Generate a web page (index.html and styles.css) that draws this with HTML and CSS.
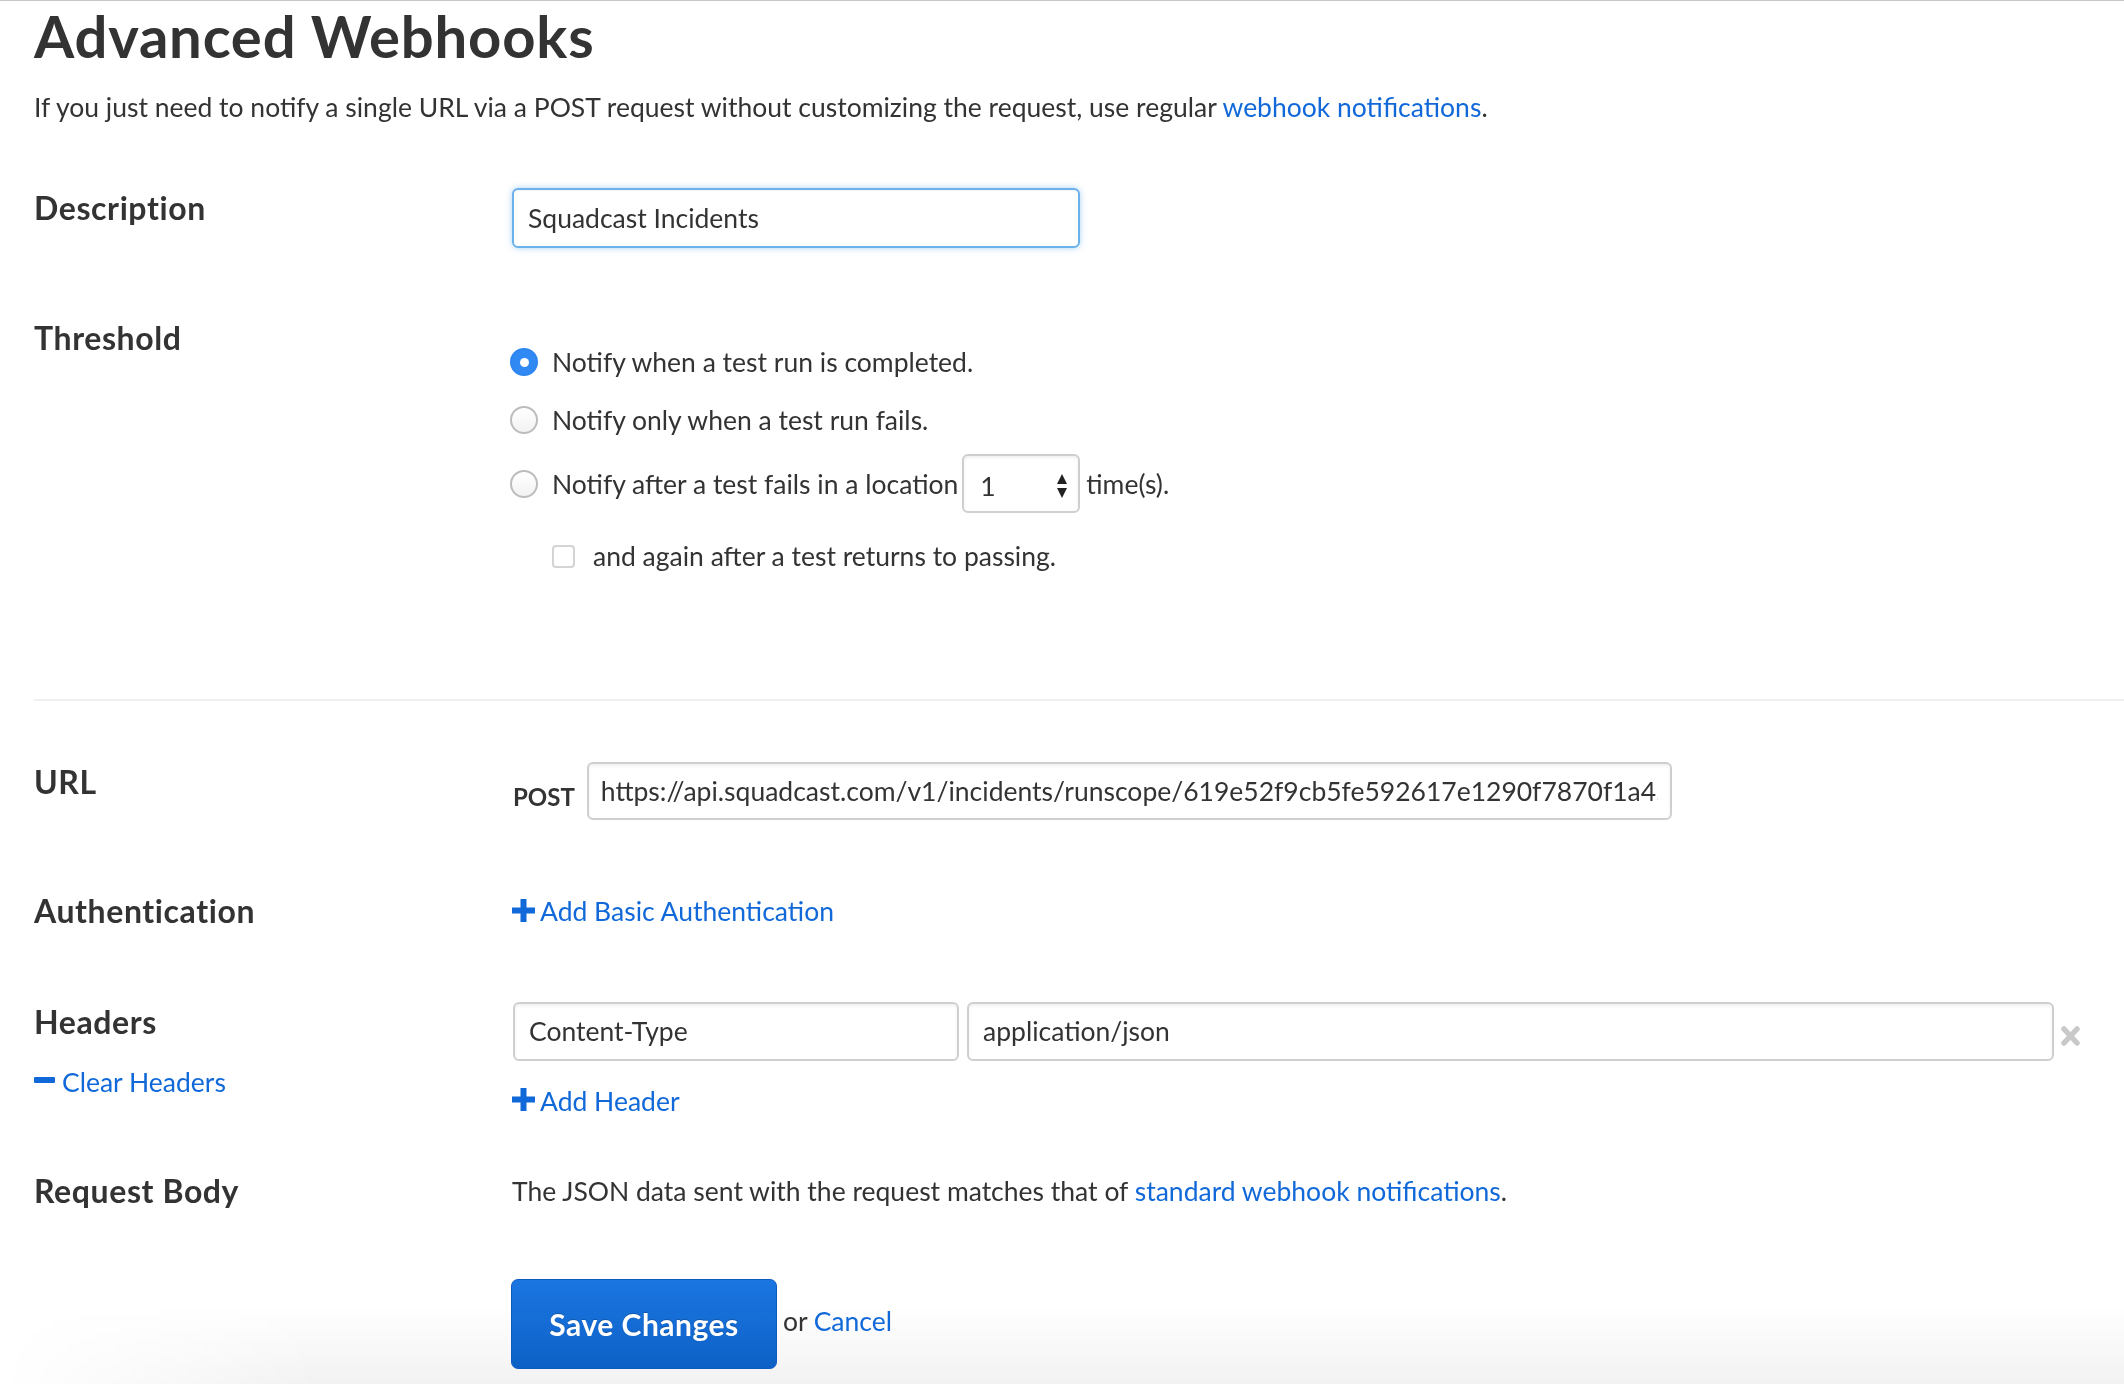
FILE: index.html
```html
<!DOCTYPE html>
<html lang="en">
<head>
<meta charset="utf-8">
<title>Advanced Webhooks</title>
<link rel="stylesheet" href="styles.css">
</head>
<body>
<div class="page">
  <h1 class="title">Advanced Webhooks</h1>
  <p class="intro">If you just need to notify a single URL via a POST request without customizing the request, use regular <a class="link" href="#">webhook notifications</a>.</p>

  <div class="row row-desc">
    <div class="label label-desc">Description</div>
    <div class="field">
      <input class="input input-desc" type="text" value="Squadcast Incidents">
    </div>
  </div>

  <div class="row row-threshold">
    <div class="label">Threshold</div>
    <div class="field options">
      <div class="option opt-1"><span class="radio radio-on"></span><span>Notify when a test run is completed.</span></div>
      <div class="option opt-2"><span class="radio"></span><span>Notify only when a test run fails.</span></div>
      <div class="option opt-3"><span class="radio"></span><span>Notify after a test fails in a location</span>
        <span class="number"><span class="number-val">1</span>
          <svg class="spin" width="12" height="26" viewBox="0 0 12 26"><path d="M6 1 L11 11 L1 11 Z" fill="#222"/><path d="M1 15 L11 15 L6 25 Z" fill="#222"/></svg>
        </span>
        <span class="times">time(s).</span></div>
      <div class="option opt-check"><span class="checkbox"></span><span>and again after a test returns to passing.</span></div>
    </div>
  </div>

  <div class="divider"></div>

  <div class="row row-url">
    <div class="label">URL</div>
    <div class="field url-field">
      <span class="post">POST</span>
      <input class="input input-url" type="text" value="https://api.squadcast.com/v1/incidents/runscope/619e52f9cb5fe592617e1290f7870f1a45d0a1b2c3d4e5f6">
    </div>
  </div>

  <div class="row row-auth">
    <div class="label">Authentication</div>
    <div class="field">
      <a class="link icon-link" href="#"><svg class="plus" width="23" height="23" viewBox="0 0 23 23"><rect x="8.5" y="0" width="6" height="23" fill="currentColor"/><rect x="0" y="8.5" width="23" height="6" fill="currentColor"/></svg>Add Basic Authentication</a>
    </div>
  </div>

  <div class="row row-headers">
    <div class="label-col">
      <div class="label">Headers</div>
      <a class="link icon-link clear" href="#"><svg class="minus" width="21" height="6" viewBox="0 0 21 6"><rect x="0" y="0" width="21" height="6" rx="1" fill="currentColor"/></svg>Clear Headers</a>
    </div>
    <div class="field headers-field">
      <div class="header-line">
        <input class="input input-key" type="text" value="Content-Type">
        <input class="input input-val" type="text" value="application/json">
        <svg class="remove" width="21" height="20" viewBox="0 0 21 20"><path d="M4 3 L17 17 M17 3 L4 17" stroke="#c9c9c9" stroke-width="5.5" stroke-linecap="round"/></svg>
      </div>
      <a class="link icon-link add-header" href="#"><svg class="plus" width="23" height="23" viewBox="0 0 23 23"><rect x="8.5" y="0" width="6" height="23" fill="currentColor"/><rect x="0" y="8.5" width="23" height="6" fill="currentColor"/></svg>Add Header</a>
    </div>
  </div>

  <div class="row row-body">
    <div class="label">Request Body</div>
    <div class="field body-text">The JSON data sent with the request matches that of <a class="link" href="#">standard webhook notifications</a>.</div>
  </div>

  <div class="row row-actions">
    <div></div>
    <div class="field actions">
      <button class="btn" type="button">Save Changes</button>
      <span class="or">or</span><a class="link" href="#">Cancel</a>
    </div>
  </div>
</div>
</body>
</html>
```

FILE: styles.css
```css
html {
  background: #fff;
}
body {
  margin: 0;
  border-top: 1px solid #c6c6c6;
  font-family: Lato, "Open Sans", sans-serif;
  color: #333;
  overflow: hidden;
}
body::after {
  content: "";
  position: fixed;
  left: 0;
  right: 0;
  bottom: 0;
  height: 78px;
  background: linear-gradient(to bottom, rgba(0,0,0,0), rgba(0,0,0,0.05));
  -webkit-mask-image: linear-gradient(to right, transparent 0, #000 320px);
  mask-image: linear-gradient(to right, transparent 0, #000 320px);
  pointer-events: none;
  z-index: -1;
}
.page {
  padding-left: 34px;
}
.link {
  color: #1169d9;
  text-decoration: none;
}
.title {
  margin: 0;
  font-size: 58px;
  line-height: 70px;
  font-weight: 700;
  letter-spacing: 0.8px;
}
.intro {
  margin: 18px 0 0;
  font-size: 26.5px;
  line-height: 36px;
}
.row {
  display: grid;
  grid-template-columns: 478px 1fr;
}
.label {
  font-size: 32px;
  font-weight: 700;
  line-height: 40px;
  letter-spacing: 0.6px;
}
.field {
  font-size: 26.5px;
  line-height: 40px;
}
.input {
  box-sizing: border-box;
  height: 59px;
  border: 2px solid #cfcfcf;
  border-radius: 6px;
  font-family: inherit;
  font-size: 26.5px;
  color: #333;
  padding: 0 14px;
  background: #fff;
  box-shadow: inset 0 2px 3px rgba(0,0,0,0.06);
  outline: none;
}

/* Description */
.row-desc {
  margin-top: 63px;
}
.input-desc {
  width: 568px;
  height: 60px;
  border-color: #6db1ec;
  box-shadow: 0 0 6px rgba(102,175,233,0.55), inset 0 1px 1px rgba(0,0,0,0.05);
}

/* Threshold */
.row-threshold {
  margin-top: 70px;
}
.options {
  display: flex;
  flex-direction: column;
}
.option {
  display: flex;
  align-items: center;
  line-height: 44px;
  margin-left: -2px;
}
.option .radio {
  margin-right: 14px;
}
.opt-1 { margin-top: 22px; }
.opt-2 { margin-top: 14px; }
.opt-3 { margin-top: 12px; }
.opt-check {
  margin-top: 21px;
  padding-left: 42px;
}
.radio {
  flex: none;
  box-sizing: border-box;
  width: 28px;
  height: 28px;
  border-radius: 50%;
  border: 2px solid #bdbdbd;
  background: linear-gradient(#fff, #f2f2f2);
  display: flex;
  align-items: center;
  justify-content: center;
}
.radio-on {
  border-color: #2f86f0;
  background: #3189f3;
}
.radio-on::after {
  content: "";
  width: 9px;
  height: 9px;
  border-radius: 50%;
  background: #fff;
}
.checkbox {
  flex: none;
  box-sizing: border-box;
  width: 23px;
  height: 23px;
  border: 2px solid #d4d4d4;
  border-radius: 4px;
  background: #fff;
  margin-right: 18px;
}
.number {
  box-sizing: border-box;
  display: flex;
  align-items: center;
  justify-content: space-between;
  width: 118px;
  height: 59px;
  margin-left: 4px;
  padding: 4px 10px 0 16px;
  border: 2px solid #cfcfcf;
  border-radius: 6px;
  box-shadow: inset 0 2px 3px rgba(0,0,0,0.06);
}
.times {
  margin-left: 6px;
}

/* Divider */
.divider {
  margin-top: 121px;
  height: 2px;
  background: #efefef;
}

/* URL */
.row-url {
  margin-top: 61px;
}
.url-field {
  display: flex;
  align-items: center;
}
.post {
  font-size: 24px;
  font-weight: 700;
  margin: 12px 12px 0 1px;
}
.input-url {
  width: 1085px;
  height: 58px;
  padding: 0 12px;
}

/* Auth */
.row-auth {
  margin-top: 71px;
}
.icon-link {
  display: inline-flex;
  align-items: center;
}
.plus {
  margin-right: 5px;
  margin-top: -2px;
}

/* Headers */
.row-headers {
  margin-top: 70px;
}
.clear {
  display: flex;
  margin-top: 22px;
  font-size: 26.5px;
  line-height: 36px;
  letter-spacing: 0;
}
.minus {
  margin-right: 7px;
  margin-top: -3px;
}
.header-line {
  display: flex;
  align-items: center;
  padding-right: 43px;
}
.input-key {
  width: 446px;
  margin-left: 1px;
}
.input-val {
  flex: 1;
  margin-left: 8px;
}
.remove {
  margin-left: 6px;
  margin-top: 10px;
}
.add-header {
  margin-top: 22px;
  line-height: 36px;
}

/* Body */
.row-body {
  margin-top: 50px;
}

/* Actions */
.row-actions {
  margin-top: 68px;
}
.actions {
  display: flex;
  align-items: center;
}
.btn {
  box-sizing: border-box;
  width: 266px;
  height: 90px;
  margin-left: -1px;
  border: 1px solid #0c5bbd;
  border-radius: 7px;
  background: linear-gradient(#1b76e2, #0d61c6);
  color: #fff;
  font-family: inherit;
  font-size: 30px;
  font-weight: 700;
  letter-spacing: 0.5px;
  text-shadow: 0 -1px 0 rgba(0,0,0,0.2);
  padding: 0;
}
.or {
  margin-left: 6px;
  margin-right: 6px;
  margin-top: -6px;
}
.actions .link {
  margin-top: -6px;
}
```
